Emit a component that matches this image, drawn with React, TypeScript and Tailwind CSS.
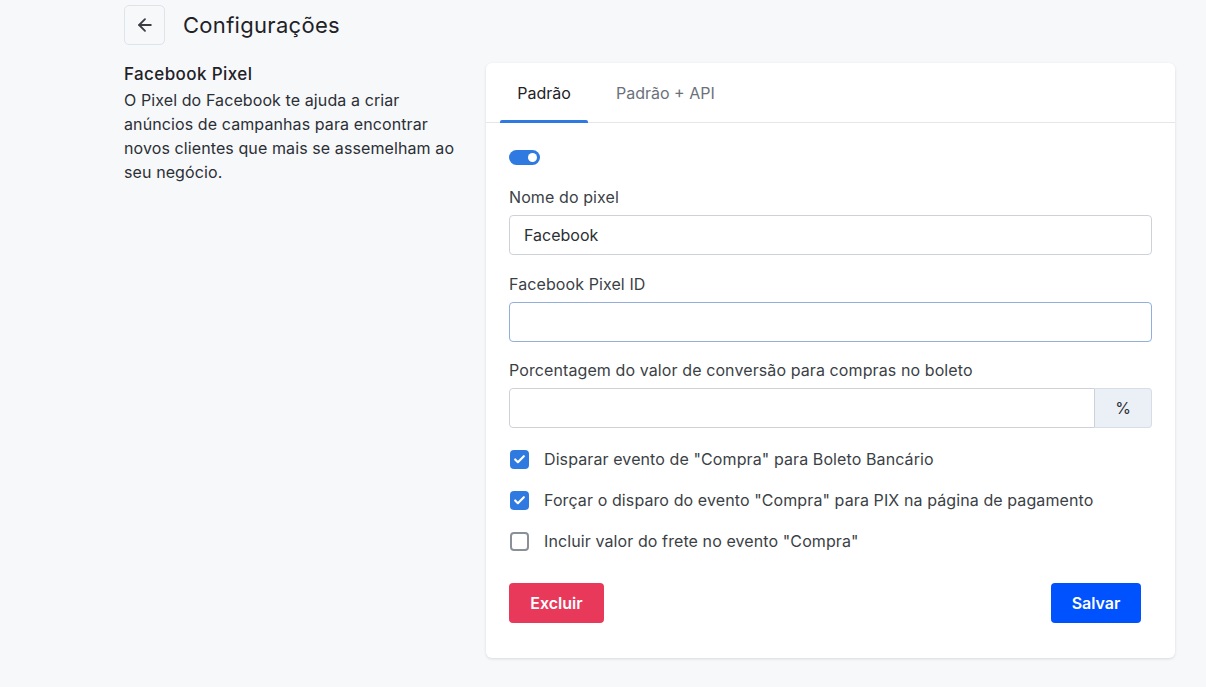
import { ArrowLeft, Check } from "lucide-react";

const font = { fontFamily: "Inter, 'Noto Sans', sans-serif" };

function Field({ label, className, children }: { label: string; className?: string; children: React.ReactNode }) {
  return (
    <div className={className ?? "mt-[18px]"}>
      <div className="text-[16px] leading-[22px] tracking-[0.1px] text-[#3b3f46] mb-[7px]">{label}</div>
      {children}
    </div>
  );
}

function CheckRow({ checked, label }: { checked: boolean; label: string }) {
  return (
    <label className="flex items-center gap-[15px] h-[22px]">
      {checked ? (
        <span className="w-[19px] h-[19px] rounded-[4px] bg-[#2f7ae0] flex items-center justify-center">
          <Check className="w-[13px] h-[13px] text-white" strokeWidth={4} />
        </span>
      ) : (
        <span className="w-[19px] h-[19px] rounded-[4px] border-2 border-[#8a8f98] bg-white" />
      )}
      <span className="text-[16px] tracking-[0.1px] text-[#3b3f46]">{label}</span>
    </label>
  );
}

export default function App() {
  return (
    <div className="min-h-[687px] bg-[#f7f8fa] text-[#212529]" style={font}>
      <div className="pl-[124px] pt-[5px]">
        <div className="flex items-center gap-[18px]">
          <button className="w-[41px] h-[40px] rounded-[5px] border border-[#dfe3ea] bg-[#f7f8fa] flex items-center justify-center">
            <ArrowLeft className="w-[20px] h-[20px] text-[#3a3d42]" strokeWidth={2.2} />
          </button>
          <h1 className="text-[22px] leading-[30px] font-normal tracking-[0.3px] text-[#1f2227]">Configurações</h1>
        </div>

        <div className="flex mt-[18px]">
          <div className="w-[362px]">
            <h2 className="text-[17px] leading-[22px] font-medium tracking-[0.4px] text-[#1f2227]">Facebook Pixel</h2>
            <p className="mt-[3px] w-[335px] text-[16px] leading-[24px] tracking-[0.1px] text-[#2b2f36]">
              O Pixel do Facebook te ajuda a criar anúncios de campanhas para encontrar novos clientes que mais se
              assemelham ao seu negócio.
            </p>
          </div>

          <div className="w-[689px] bg-white rounded-[6px] shadow-[0_1px_3px_rgba(0,0,0,0.12)] pb-[35px]">
            <div className="flex border-b border-[#e3e6eb] px-[14px] h-[60px]">
              <div className="relative w-[88px] flex items-center justify-center text-[16px] text-[#1f2227]">
                Padrão
                <span className="absolute left-0 right-0 bottom-[-1px] h-[3px] rounded-t-[2px] bg-[#2f7ae0]" />
              </div>
              <div className="ml-[14px] px-[14px] flex items-center text-[16px] text-[#6b717b]">Padrão + API</div>
            </div>

            <div className="px-[23px] pt-[27px]">
              <div className="w-[31px] h-[15px] rounded-full bg-[#2f7ae0] relative">
                <span className="absolute right-[3px] top-[3px] w-[9px] h-[9px] rounded-full bg-white" />
              </div>

              <Field label="Nome do pixel" className="mt-[21px]">
                <div className="h-[40px] rounded-[4px] border border-[#ced2d8] flex items-center px-[14px] text-[16px] text-[#2b2f36]">
                  Facebook
                </div>
              </Field>
              <Field label="Facebook Pixel ID">
                <div className="h-[40px] rounded-[4px] border border-[#93aedb]" />
              </Field>
              <Field label="Porcentagem do valor de conversão para compras no boleto" className="mt-[17px]">
                <div className="flex h-[40px]">
                  <div className="flex-1 rounded-l-[4px] border border-[#ced2d8]" />
                  <div className="w-[57px] rounded-r-[4px] border border-l-0 border-[#d8dee8] bg-[#ebf0f7] flex items-center justify-center text-[16px] text-[#2b2f36]">
                    %
                  </div>
                </div>
              </Field>

              <div className="mt-[20px] flex flex-col gap-[19px] pl-[1px]">
                <CheckRow checked label={'Disparar evento de "Compra" para Boleto Bancário'} />
                <CheckRow checked label={'Forçar o disparo do evento "Compra" para PIX na página de pagamento'} />
                <CheckRow checked={false} label={'Incluir valor do frete no evento "Compra"'} />
              </div>

              <div className="mt-[31px] flex justify-between pr-[11px]">
                <button className="w-[95px] h-[40px] rounded-[4px] bg-[#e8395b] text-white text-[16px] font-semibold">
                  Excluir
                </button>
                <button className="w-[90px] h-[40px] rounded-[4px] bg-[#0052ff] text-white text-[16px] font-semibold">
                  Salvar
                </button>
              </div>
            </div>
          </div>
        </div>
      </div>
    </div>
  );
}
